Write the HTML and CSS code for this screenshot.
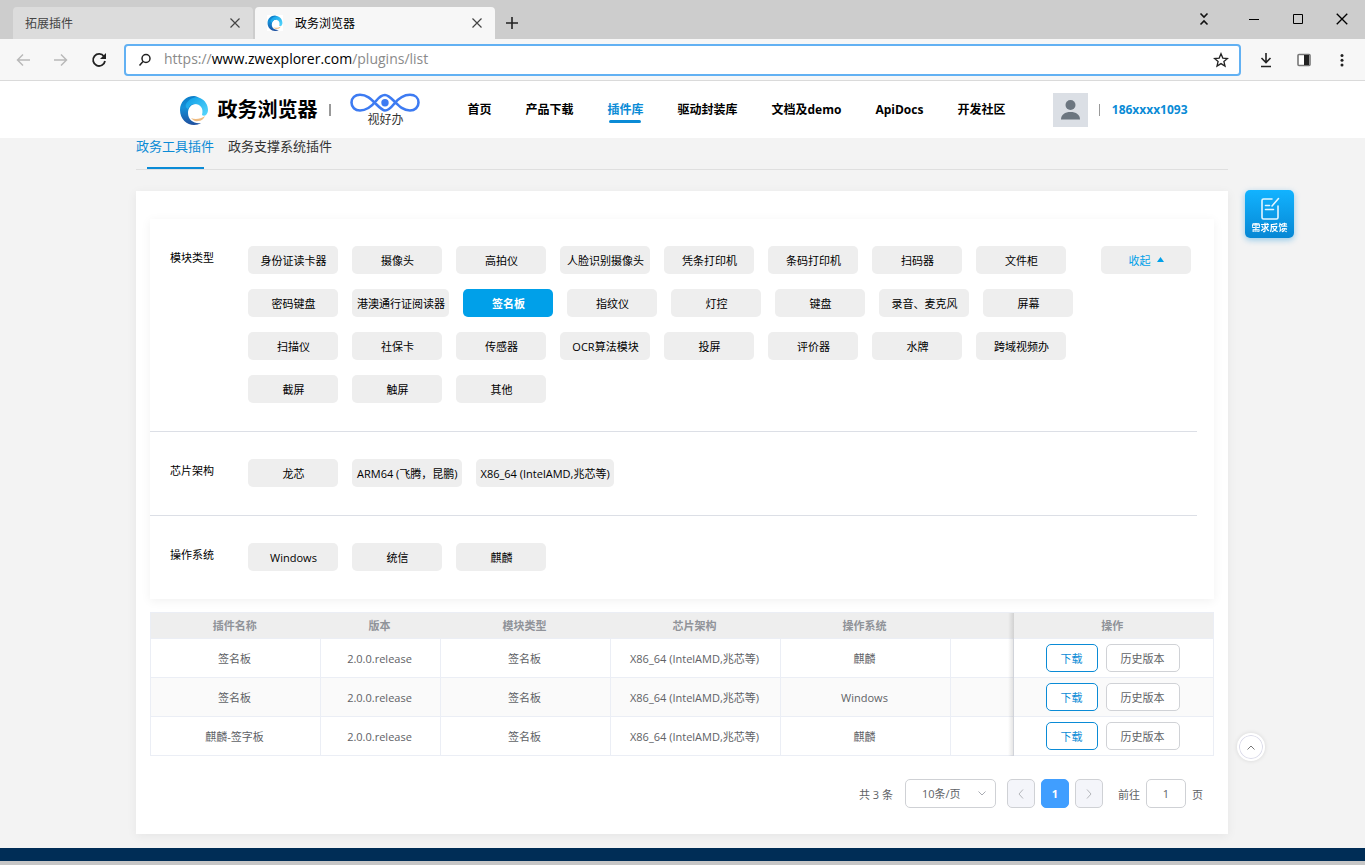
FILE: index.html
```html
<!DOCTYPE html>
<html lang="zh-CN">

<head>
    <meta charset="UTF-8">
    <meta name="viewport" content="width=device-width, initial-scale=1.0">
    <title>政务浏览器</title>
    <link rel="stylesheet" href="styles.css">
</head>

<body>
    <svg class="defs" width="0" height="0" aria-hidden="true">
        <defs>
            <linearGradient id="swirl" x1="0" y1="0" x2="0" y2="1">
                <stop offset="0" stop-color="#0b7cc8" />
                <stop offset="0.4" stop-color="#1590d8" />
                <stop offset="1" stop-color="#1f4f9e" />
            </linearGradient>
            <linearGradient id="swirl_light" x1="0" y1="0" x2="1" y2="1">
                <stop offset="0" stop-color="#0a9be6" />
                <stop offset="1" stop-color="#5ad8fc" />
            </linearGradient>
            <symbol id="logo" viewBox="0 0 30 30">
                <path d="M15 1C7 1 1 7 1 15c0 9 7 15 14 15 3 0 5-1 7-2-7 1-13-3-13-10 0-5 3-9 8-9l4-5c-2-2-4-3-6-3z" fill="url(#swirl)" />
                <path d="M7 9C10 4 16 1 21 3c5 2 8 7 8 12 0 2-1 4-2 5-1 1-3 1-4 0 2-7-2-11-7-11-4 0-6 2-7 5-2-1-3-3-2-5z" fill="url(#swirl_light)" />
                <path d="M12 23c4 2 10 1 14-2-1 3-4 5-7 5-3 1-5-1-7-3z" fill="#eebb80" />
            </symbol>
            <symbol id="close" viewBox="0 0 12 12">
                <path d="M1.500 1.500l9 9M10.500 1.500l-9 9" fill="none" stroke="currentColor" stroke-width="1.200" />
            </symbol>
        </defs>
    </svg>

    <div class="tabstrip">
        <div class="tab">
            <span class="tab_title">拓展插件</span>
            <button class="icon" aria-label="关闭"><svg width="12" height="12"><use href="#close" /></svg></button>
        </div>
        <div class="tab active">
            <svg class="favicon" width="16" height="16"><use href="#logo" /></svg>
            <span class="tab_title">政务浏览器</span>
            <button class="icon" aria-label="关闭"><svg width="12" height="12"><use href="#close" /></svg></button>
        </div>
        <button class="icon new_tab" aria-label="新标签页">
            <svg width="14" height="14" viewBox="0 0 14 14"><path d="M7 1v12M1 7h12" stroke="#222" stroke-width="1.600" /></svg>
        </button>
        <div class="window_btns">
            <button class="icon" aria-label="收起">
                <svg width="12" height="14" viewBox="0 0 12 14" fill="none" stroke="#111" stroke-width="1.600"><path d="M2.500 1.500L6 5 9.500 1.500M2.500 12.500L6 9 9.500 12.500" /></svg>
            </button>
            <button class="icon" aria-label="最小化">
                <svg width="12" height="12" viewBox="0 0 12 12"><path d="M1 6.500h10" stroke="#000" /></svg>
            </button>
            <button class="icon" aria-label="最大化">
                <svg width="12" height="12" viewBox="0 0 12 12"><path d="M1.500 1.500h9v9h-9z" fill="none" stroke="#000" /></svg>
            </button>
            <button class="icon dark" aria-label="关闭窗口"><svg width="14" height="14"><use href="#close" /></svg></button>
        </div>
    </div>

    <div class="toolbar">
        <button class="icon" aria-label="后退">
            <svg width="14" height="14" viewBox="0 0 14 14" fill="none" stroke="#b9b9b9" stroke-width="1.500"><path d="M14 7H1.500M7 1.500L1.500 7 7 12.500" /></svg>
        </button>
        <button class="icon" aria-label="前进">
            <svg width="14" height="14" viewBox="0 0 14 14" fill="none" stroke="#b9b9b9" stroke-width="1.500"><path d="M0 7h12.500M7 1.500L12.500 7 7 12.500" /></svg>
        </button>
        <button class="icon" aria-label="刷新">
            <svg width="16" height="16" viewBox="0 0 16 16"><path d="M13 4.500A6 6 0 1 0 14 9" fill="none" stroke="#222" stroke-width="1.800" /><path d="M15 1v6H9z" fill="#222" /></svg>
        </button>
        <div class="address">
            <svg width="14" height="14" viewBox="0 0 14 14" fill="none" stroke="#222" stroke-width="1.500"><circle cx="8" cy="5.500" r="4" /><path d="M5 8.500L1.500 12.500" /></svg>
            <a class="url" href="#">https://<b>www.zwexplorer.com</b>/plugins/list</a>
            <button class="icon" aria-label="收藏">
                <svg width="16" height="16" viewBox="0 0 16 16"><path d="M8 1.800l1.800 4.300 4.700.4-3.600 3 1.100 4.600L8 11.600l-4 2.500 1.100-4.600-3.600-3 4.700-.4z" fill="none" stroke="#222" stroke-width="1.300" /></svg>
            </button>
        </div>
        <div class="tools">
            <button class="icon" aria-label="下载内容">
                <svg width="14" height="16" viewBox="0 0 14 16" fill="none" stroke="#222" stroke-width="1.600"><path d="M7 1v9.500M2.500 6L7 10.500 11.500 6M2 14.500h10" /></svg>
            </button>
            <button class="icon" aria-label="侧边栏">
                <svg width="14" height="14" viewBox="0 0 14 14"><rect x="1" y="1.500" width="12" height="11" rx="1" fill="#fff" stroke="#777" stroke-width="1.600" /><path d="M7 2h5v10H7z" fill="#222" /></svg>
            </button>
            <button class="icon" aria-label="更多">
                <svg width="14" height="14" viewBox="0 0 14 14" fill="#222"><circle cx="7" cy="2.500" r="1.500" /><circle cx="7" cy="7.200" r="1.500" /><circle cx="7" cy="12" r="1.500" /></svg>
            </button>
        </div>
    </div>

    <div class="header">
        <svg class="logo" width="30" height="30"><use href="#logo" /></svg>
        <h1>政务浏览器</h1>
        <span class="bar thick"></span>
        <div class="shb">
            <svg width="70" height="20" viewBox="0 0 70 20" fill="none" stroke="#3d7bf2" stroke-width="2.600">
                <path d="M10 1.800C17 1.800 21 6 26 11s7 6.500 9 6.500 5-1.500 9-6.500S53 1.800 60 1.800c5 0 8.500 3 8.500 7.700S65 17.500 60 17.500C53 17.500 49 13 44 8s-7-6-9-6-5 1-9 6-9 9.500-16 9.500c-5 0-8.500-3.300-8.500-8S5 1.800 10 1.800z" />
                <circle cx="35" cy="9.700" r="3.700" fill="#3d7bf2" stroke="none" />
            </svg>
            <span>视好办</span>
        </div>
        <nav>
            <a href="#">首页</a>
            <a href="#">产品下载</a>
            <a href="#" class="current">插件库</a>
            <a href="#">驱动封装库</a>
            <a href="#">文档及demo</a>
            <a href="#">ApiDocs</a>
            <a href="#">开发社区</a>
        </nav>
        <svg class="avatar" width="35" height="34" viewBox="0 0 35 34">
            <path d="M0 0h35v34H0z" fill="#dbdfe5" />
            <circle cx="17.500" cy="12" r="5" fill="#6c7680" />
            <path d="M8 26.500c0-5 4-7.500 9.500-7.500s9.500 2.500 9.500 7.500z" fill="#6c7680" />
        </svg>
        <span class="bar"></span>
        <a class="user" href="#">186xxxx1093</a>
    </div>

    <div class="main">
        <div class="sub_tabs">
            <a href="#" class="current">政务工具插件</a>
            <a href="#">政务支撑系统插件</a>
        </div>

        <div class="panel">
            <div class="filters">
                <div class="filter">
                    <div class="label">模块类型</div>
                    <div class="options">
                        <button>身份证读卡器</button>
                        <button>摄像头</button>
                        <button>高拍仪</button>
                        <button>人脸识别摄像头</button>
                        <button>凭条打印机</button>
                        <button>条码打印机</button>
                        <button>扫码器</button>
                        <button>文件柜</button>
                        <button>密码键盘</button>
                        <button>港澳通行证阅读器</button>
                        <button class="selected">签名板</button>
                        <button>指纹仪</button>
                        <button>灯控</button>
                        <button>键盘</button>
                        <button>录音、麦克风</button>
                        <button>屏幕</button>
                        <button>扫描仪</button>
                        <button>社保卡</button>
                        <button>传感器</button>
                        <button>OCR算法模块</button>
                        <button>投屏</button>
                        <button>评价器</button>
                        <button>水牌</button>
                        <button>跨域视频办</button>
                        <button>截屏</button>
                        <button>触屏</button>
                        <button>其他</button>
                    </div>
                    <button class="fold">收起<svg width="7" height="5" viewBox="0 0 7 5"><path d="M0 5l3.500-5L7 5z" fill="#00a0e9" /></svg></button>
                </div>
                <div class="filter">
                    <div class="label">芯片架构</div>
                    <div class="options">
                        <button>龙芯</button>
                        <button>ARM64 (飞腾，昆鹏)</button>
                        <button>X86_64 (IntelAMD,兆芯等)</button>
                    </div>
                </div>
                <div class="filter">
                    <div class="label">操作系统</div>
                    <div class="options">
                        <button>Windows</button>
                        <button>统信</button>
                        <button>麒麟</button>
                    </div>
                </div>
            </div>

            <table>
                <colgroup>
                    <col class="w170">
                    <col class="w120">
                    <col class="w170">
                    <col class="w170">
                    <col class="w170">
                    <col>
                    <col class="w200">
                </colgroup>
                <thead>
                    <tr>
                        <th>插件名称</th>
                        <th>版本</th>
                        <th>模块类型</th>
                        <th>芯片架构</th>
                        <th>操作系统</th>
                        <th></th>
                        <th class="fixed">操作</th>
                    </tr>
                </thead>
                <tbody>
                    <tr>
                        <td>签名板</td>
                        <td>2.0.0.release</td>
                        <td>签名板</td>
                        <td>X86_64 (IntelAMD,兆芯等)</td>
                        <td>麒麟</td>
                        <td></td>
                        <td class="fixed"><button class="download">下载</button><button>历史版本</button></td>
                    </tr>
                    <tr>
                        <td>签名板</td>
                        <td>2.0.0.release</td>
                        <td>签名板</td>
                        <td>X86_64 (IntelAMD,兆芯等)</td>
                        <td>Windows</td>
                        <td></td>
                        <td class="fixed"><button class="download">下载</button><button>历史版本</button></td>
                    </tr>
                    <tr>
                        <td>麒麟-签字板</td>
                        <td>2.0.0.release</td>
                        <td>签名板</td>
                        <td>X86_64 (IntelAMD,兆芯等)</td>
                        <td>麒麟</td>
                        <td></td>
                        <td class="fixed"><button class="download">下载</button><button>历史版本</button></td>
                    </tr>
                </tbody>
            </table>

            <div class="pagination">
                <span class="total">共 3 条</span>
                <span class="size">
                    <select aria-label="每页条数">
                        <option>10条/页</option>
                        <option>20条/页</option>
                        <option>50条/页</option>
                    </select>
                    <svg width="8" height="5" viewBox="0 0 8 5"><path d="M.5.5L4 4 7.500.5" fill="none" stroke="#a8abb2" /></svg>
                </span>
                <button class="page" aria-label="上一页"><svg width="6" height="10" viewBox="0 0 6 10"><path d="M5 .5L1 5l4 4.500" fill="none" stroke="#b4b6bb" /></svg></button>
                <button class="page on">1</button>
                <button class="page" aria-label="下一页"><svg width="6" height="10" viewBox="0 0 6 10"><path d="M1 .5L5 5 1 9.500" fill="none" stroke="#b4b6bb" /></svg></button>
                <label class="goto">前往 <input type="text" value="1"> 页</label>
            </div>
        </div>
    </div>

    <div class="footer"></div>

    <button class="feedback">
        <svg width="20" height="24" viewBox="0 0 20 24" fill="none" stroke="#e4f6ff" stroke-width="1.600" stroke-linecap="round">
            <path d="M12 2H3.500Q2 2 2 3.500v17Q2 22 3.500 22h13q1.500 0 1.500-1.500V9M18.500 1.500L12 9M5.500 8.500h4M5.500 12.500h8" />
        </svg>
        需求反馈
    </button>
    <button class="to_top" aria-label="回到顶部">
        <svg width="8" height="5" viewBox="0 0 8 5"><path d="M.5 4.500L4 1l3.500 3.500" fill="none" stroke="#777" /></svg>
    </button>
</body>

</html>
```
FILE: styles.css
```css
* {
    box-sizing: border-box;
    font-family: "Open Sans", "Noto Sans CJK SC", sans-serif;
}

body {
    margin: 0px;
    background-color: #f3f3f3;
    color: #000;
    font-size: 11px;
}

a {
    color: inherit;
    text-decoration: none;
}

button {
    padding: 0px;
    border: none;
    background: none;
    color: inherit;
    font-size: 11px;
    cursor: pointer;
}

svg {
    flex: none;
}

.defs {
    position: absolute;
}

.icon {
    display: flex;
    align-items: center;
    justify-content: center;
    width: 16px;
    height: 16px;
    color: #444;
}

.icon.dark {
    color: #000;
}

/* browser window */
.tabstrip {
    display: flex;
    align-items: flex-end;
    height: 39px;
    padding-left: 13px;
    background-color: #cdcdcd;
}

.tab {
    display: flex;
    align-items: center;
    width: 240px;
    height: 32px;
    padding: 0px 10px 0px 12px;
    border-radius: 4px 4px 0px 0px;
    background-color: #dcdcdc;
    color: #444;
    font-size: 12px;
}

.tab.active {
    background-color: #f7f7f7;
    color: #000;
    margin-left: 2px;
}

.tab_title {
    flex: 1;
}

.favicon {
    margin-right: 12px;
    background-color: #fff;
}

.new_tab {
    margin: 0px 0px 8px 9px;
}

.window_btns {
    display: flex;
    gap: 28px;
    margin: 0px 15px 12px auto;
}

.window_btns .icon:first-child {
    margin-right: 6px;
}

.toolbar {
    display: flex;
    align-items: center;
    height: 42px;
    padding: 0px 15px;
    background-color: #f7f7f7;
    border-bottom: 1px solid #dadada;
}

.toolbar > .icon {
    margin-right: 22px;
}

.toolbar > .icon:nth-child(3) {
    margin-right: 17px;
}

.address {
    flex: 1;
    display: flex;
    align-items: center;
    height: 32px;
    padding: 0px 10px 0px 12px;
    border: 2px solid #62b1f3;
    border-radius: 4px;
    background-color: #fff;
}

.url {
    flex: 1;
    margin-left: 12px;
    padding-bottom: 2px;
    color: #8a8a8a;
    font-size: 14px;
    line-height: 20px;
}

.url b {
    font-weight: normal;
    color: #000;
}

.tools {
    display: flex;
    gap: 22px;
    margin-left: 17px;
}

/* site header */
.header {
    display: flex;
    align-items: center;
    height: 57px;
    padding: 0px 13%;
    background-color: #fff;
}

.logo {
    margin-left: 2px;
}

.header h1 {
    margin: 0px 12px 0px 8px;
    font-size: 20px;
    line-height: 30px;
    white-space: nowrap;
}

.bar {
    width: 1px;
    height: 12px;
    background-color: #999;
}

.bar.thick {
    width: 2px;
}

.shb {
    display: flex;
    flex-direction: column;
    align-items: center;
    margin: 0px 47px 0px 19px;
    color: #333;
    font-size: 12px;
    line-height: 14px;
}

nav {
    display: flex;
    gap: 34px;
    font-size: 12px;
    font-weight: bold;
    line-height: 18px;
    white-space: nowrap;
}

nav a {
    position: relative;
}

nav .current {
    color: #0a8bd6;
}

nav .current::after {
    content: "";
    position: absolute;
    left: 2px;
    right: 2px;
    bottom: -4px;
    height: 3px;
    border-radius: 2px;
    background-color: #0a8bd6;
}

.avatar {
    margin: 0px 11px 0px auto;
}

.user {
    margin-left: 12px;
    color: #0a8bd6;
    font-size: 12px;
    font-weight: bold;
}

/* content */
.main {
    margin: 0px 137px 0px 136px;
}

.sub_tabs {
    display: flex;
    gap: 14px;
    height: 32px;
    margin-bottom: 21px;
    border-bottom: 1px solid #dfdfdf;
    color: #333;
    font-size: 13px;
    line-height: 16px;
}

.sub_tabs .current {
    position: relative;
    color: #0a8bd6;
}

.sub_tabs .current::after {
    content: "";
    position: absolute;
    left: 11px;
    bottom: 0px;
    width: 57px;
    height: 2px;
    background-color: #0a8bd6;
}

.panel {
    padding: 28px 14px 26px;
    background-color: #fff;
    box-shadow: rgba(0, 0, 0, 0.06) 0px 2px 10px;
}

.filters {
    padding-right: 17px;
    box-shadow: rgba(0, 0, 0, 0.06) 0px 2px 10px;
}

.filter {
    display: flex;
    align-items: flex-start;
    padding: 27px 6px 28px 20px;
}

.filter + .filter {
    border-top: 1px solid #dcdfe6;
}

.label {
    width: 78px;
    line-height: 24px;
}

.options {
    flex: 1;
    display: flex;
    flex-wrap: wrap;
    gap: 15px 14px;
}

.options button,
.fold {
    min-width: 90px;
    height: 28px;
    padding: 0px 5px;
    border-radius: 5px;
    background-color: #eee;
}

/* long names may fill the whole button */
.options button {
    padding: 0px 4px 0px 5px;
    white-space: nowrap;
}

.options .selected {
    background-color: #00a0e9;
    color: #fff;
    font-weight: bold;
}

.fold {
    color: #00a0e9;
}

.fold svg {
    margin: 0px 0px 3px 6px;
}

table {
    width: 100%;
    margin-top: 13px;
    border-collapse: collapse;
    table-layout: fixed;
    border: 1px solid #ebeef5;
    color: #606266;
    text-align: center;
}

.w170 {
    width: 170px;
}

.w120 {
    width: 120px;
}

.w200 {
    width: 200px;
}

th {
    height: 26px;
    padding: 0px 2px 2px 0px;
    background-color: #eee;
    color: #909399;
}

td {
    height: 39px;
    padding: 0px 2px 0px 0px;
    border: 1px solid #ebeef5;
}

tbody tr:nth-child(even) {
    background-color: #fafafa;
}

.fixed {
    position: relative;
    border-left: none;
}

.fixed::before {
    content: "";
    position: absolute;
    top: 0px;
    bottom: -1px;
    left: -6px;
    width: 6px;
    background-image: linear-gradient(to left, rgba(0, 0, 0, 0.12), rgba(0, 0, 0, 0));
}

td button {
    height: 28px;
    padding: 0px 14px;
    border: 1px solid #d0d2d6;
    border-radius: 5px;
    background-color: #fff;
}

td .download {
    margin-right: 8px;
    border-color: #0a8bd6;
    color: #0a8bd6;
}

.pagination {
    display: flex;
    align-items: center;
    justify-content: flex-end;
    margin-top: 23px;
    padding-right: 11px;
    color: #606266;
}

.size {
    position: relative;
    margin: 0px 11px 0px 12px;
}

.size select {
    appearance: none;
    width: 91px;
    height: 29px;
    padding: 0px 16px;
    border: 1px solid #cfd1d5;
    border-radius: 5px;
    background-color: #fff;
    color: #606266;
    font-size: 11px;
}

.size svg {
    position: absolute;
    right: 10px;
    top: 12px;
}

.page {
    display: flex;
    align-items: center;
    justify-content: center;
    width: 28px;
    height: 29px;
    margin-right: 6px;
    border: 1px solid #cfd1d5;
    border-radius: 5px;
    background-color: #f4f5fa;
}

.page.on {
    border-color: #409eff;
    background-color: #409eff;
    color: #fff;
    font-weight: bold;
}

.goto {
    display: flex;
    align-items: center;
    gap: 6px;
    margin-left: 9px;
}

.goto input {
    width: 40px;
    height: 29px;
    border: 1px solid #cfd1d5;
    border-radius: 5px;
    color: #606266;
    font-size: 11px;
    text-align: center;
}

.footer {
    height: 17px;
    margin-top: 14px;
    background-color: #002d56;
    border-bottom: 4px solid #c6c6c6;
}

/* floating buttons */
.feedback {
    position: fixed;
    top: 190px;
    right: 71px;
    display: flex;
    flex-direction: column;
    align-items: center;
    width: 49px;
    height: 48px;
    padding-top: 7px;
    border-radius: 5px;
    background-image: linear-gradient(#12b3ff, #0687d4);
    box-shadow: rgba(0, 140, 220, 0.4) 0px 2px 6px;
    color: #fff;
    font-size: 9px;
    font-weight: bold;
    line-height: 14px;
}

.to_top {
    position: fixed;
    right: 100px;
    bottom: 104px;
    display: flex;
    align-items: center;
    justify-content: center;
    width: 28px;
    height: 28px;
    border: 2px solid #fff;
    border-radius: 50%;
    background-color: #fff;
    box-shadow: inset 0px 0px 0px 1px #dcdcea, rgba(0, 0, 0, 0.12) 0px 0px 4px;
}
```
